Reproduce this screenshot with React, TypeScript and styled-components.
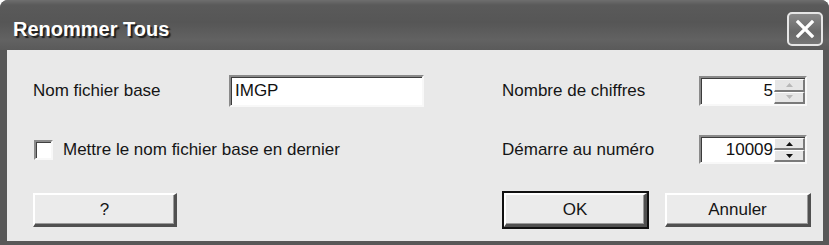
import React from "react";
import styled, { createGlobalStyle } from "styled-components";

const Global = createGlobalStyle`
  html, body { margin: 0; padding: 0; background: #ffffff; }
  body { font-family: "Liberation Sans", Arial, sans-serif; }
`;

const Window = styled.div`
  width: 829px;
  height: 245px;
  box-sizing: border-box;
  display: flex;
  flex-direction: column;
  background: #585858;
  border-radius: 8px 8px 0 0;
  padding: 0 6px 4px 7px;
  overflow: hidden;
`;

const TitleBar = styled.div`
  height: 50px;
  display: flex;
  align-items: center;
  justify-content: space-between;
  margin: 0 -6px 0 -7px;
  padding: 4px 6px 0 13px;
  box-sizing: border-box;
  background: linear-gradient(
    to bottom,
    #6e6e6e 0%,
    #5a5a5a 10%,
    #565656 45%,
    #626262 80%,
    #5a5a5a 100%
  );
`;

const Title = styled.span`
  font-family: "Liberation Sans", Arial, sans-serif;
  font-weight: bold;
  font-size: 20px;
  color: #ffffff;
  text-shadow: 2px 2px 1px #1e1e1e;
  margin-top: 5px;
`;

const CloseButton = styled.div`
  width: 36px;
  height: 34px;
  box-sizing: border-box;
  border: 2px solid #e6e6e6;
  border-radius: 5px;
  background: linear-gradient(to bottom, #8a8a8a, #6a6a6a 60%, #767676);
  display: flex;
  align-items: center;
  justify-content: center;
  margin-top: 3px;
`;

const Body = styled.div`
  flex: 1;
  background: #e9e9e9;
  display: flex;
  flex-direction: column;
  padding: 25px 12px 0 26px;
`;

const Row = styled.div`
  display: grid;
  grid-template-columns: 196px 195px 78px 197px 108px;
  align-items: center;
`;

const Label = styled.span`
  font-size: 17px;
  color: #151515;
  white-space: nowrap;
`;

const TextInput = styled.div`
  height: 32px;
  box-sizing: border-box;
  background: #ffffff;
  border-top: 2px solid #8a8a8a;
  border-left: 2px solid #8a8a8a;
  border-bottom: 2px solid #f8f8f8;
  border-right: 2px solid #f8f8f8;
  box-shadow: inset 1px 1px 0 #3c3c3c;
  display: flex;
  align-items: center;
  padding-left: 4px;
  font-size: 17px;
  color: #111;
`;

const Spin = styled.div<{ $h: number }>`
  height: ${(p) => p.$h}px;
  box-sizing: border-box;
  background: #ffffff;
  border-top: 2px solid #8a8a8a;
  border-left: 2px solid #8a8a8a;
  border-bottom: 2px solid #f8f8f8;
  border-right: 2px solid #f8f8f8;
  box-shadow: inset 1px 1px 0 #3c3c3c;
  display: flex;
  align-items: stretch;
`;

const SpinValue = styled.div`
  flex: 1;
  display: flex;
  align-items: center;
  justify-content: flex-end;
  padding-right: 1px;
  font-size: 17px;
  color: #111;
`;

const SpinButtons = styled.div`
  width: 31px;
  display: flex;
  flex-direction: column;
  padding: 1px 0 0 0;
`;

const SpinHalf = styled.div<{ $disabled?: boolean }>`
  flex: 1;
  background: #e6e6e6;
  border-top: 1px solid #ffffff;
  border-left: 1px solid #ffffff;
  border-bottom: 2px solid #7a7a7a;
  border-right: 2px solid #7a7a7a;
  display: flex;
  align-items: center;
  justify-content: center;
  color: ${(p) => (p.$disabled ? "#b8b8b8" : "#111")};
`;

const CheckRow = styled.label`
  grid-column: 1 / span 3;
  display: flex;
  align-items: center;
  gap: 10px;
  margin-left: 1px;
`;

const CheckBox = styled.span`
  width: 19px;
  height: 20px;
  box-sizing: border-box;
  background: #ffffff;
  border-top: 2px solid #8a8a8a;
  border-left: 2px solid #8a8a8a;
  border-bottom: 2px solid #f8f8f8;
  border-right: 2px solid #f8f8f8;
  box-shadow: inset 1px 1px 0 #404040;
`;

const ButtonRow = styled.div`
  display: flex;
  align-items: center;
  margin-top: 29px;
`;

const Button = styled.div<{ $w: number; $default?: boolean }>`
  width: ${(p) => p.$w}px;
  height: 34px;
  box-sizing: border-box;
  background: #ebebeb;
  border-top: 2px solid #ffffff;
  border-left: 2px solid #ffffff;
  border-bottom: 3px solid #505050;
  border-right: 3px solid #505050;
  box-shadow: ${(p) =>
    p.$default ? "0 0 0 2px #111, inset -1px -1px 0 #9a9a9a" : "inset -1px -1px 0 #9a9a9a"};
  display: flex;
  align-items: center;
  justify-content: center;
  font-size: 17px;
  color: #151515;
`;

const Spacer = styled.div`
  flex: 1;
`;

const Gap = styled.div<{ $w: number }>`
  width: ${(p) => p.$w}px;
`;

const Arrow = ({ up }: { up?: boolean }) => (
  <svg width="7" height="4" viewBox="0 0 7 4">
    <polygon points={up ? "3.5,0 7,4 0,4" : "0,0 7,0 3.5,4"} fill="currentColor" />
  </svg>
);

const SpinBox = ({ value, h, disabledArrows }: { value: string; h: number; disabledArrows?: boolean }) => (
  <Spin $h={h}>
    <SpinValue>{value}</SpinValue>
    <SpinButtons>
      <SpinHalf $disabled={disabledArrows}>
        <Arrow up />
      </SpinHalf>
      <SpinHalf $disabled={disabledArrows}>
        <Arrow />
      </SpinHalf>
    </SpinButtons>
  </Spin>
);

export default function App() {
  return (
    <>
      <Global />
      <Window>
        <TitleBar>
          <Title>Renommer Tous</Title>
          <CloseButton>
            <svg width="20" height="20" viewBox="0 0 20 20">
              <path d="M3 3 L17 17 M17 3 L3 17" stroke="#ffffff" strokeWidth="3.2" strokeLinecap="square" />
            </svg>
          </CloseButton>
        </TitleBar>
        <Body>
          <Row>
            <Label>Nom fichier base</Label>
            <TextInput>IMGP</TextInput>
            <span />
            <Label>Nombre de chiffres</Label>
            <SpinBox value="5" h={30} disabledArrows />
          </Row>
          <Row style={{ marginTop: 28 }}>
            <CheckRow>
              <CheckBox />
              <Label>Mettre le nom fichier base en dernier</Label>
            </CheckRow>
            <Label>Démarre au numéro</Label>
            <SpinBox value="10009" h={29} />
          </Row>
          <ButtonRow>
            <Button $w={144}>?</Button>
            <Spacer />
            <Button $w={143} $default>
              OK
            </Button>
            <Gap $w={18} />
            <Button $w={146}>Annuler</Button>
          </ButtonRow>
        </Body>
      </Window>
    </>
  );
}
